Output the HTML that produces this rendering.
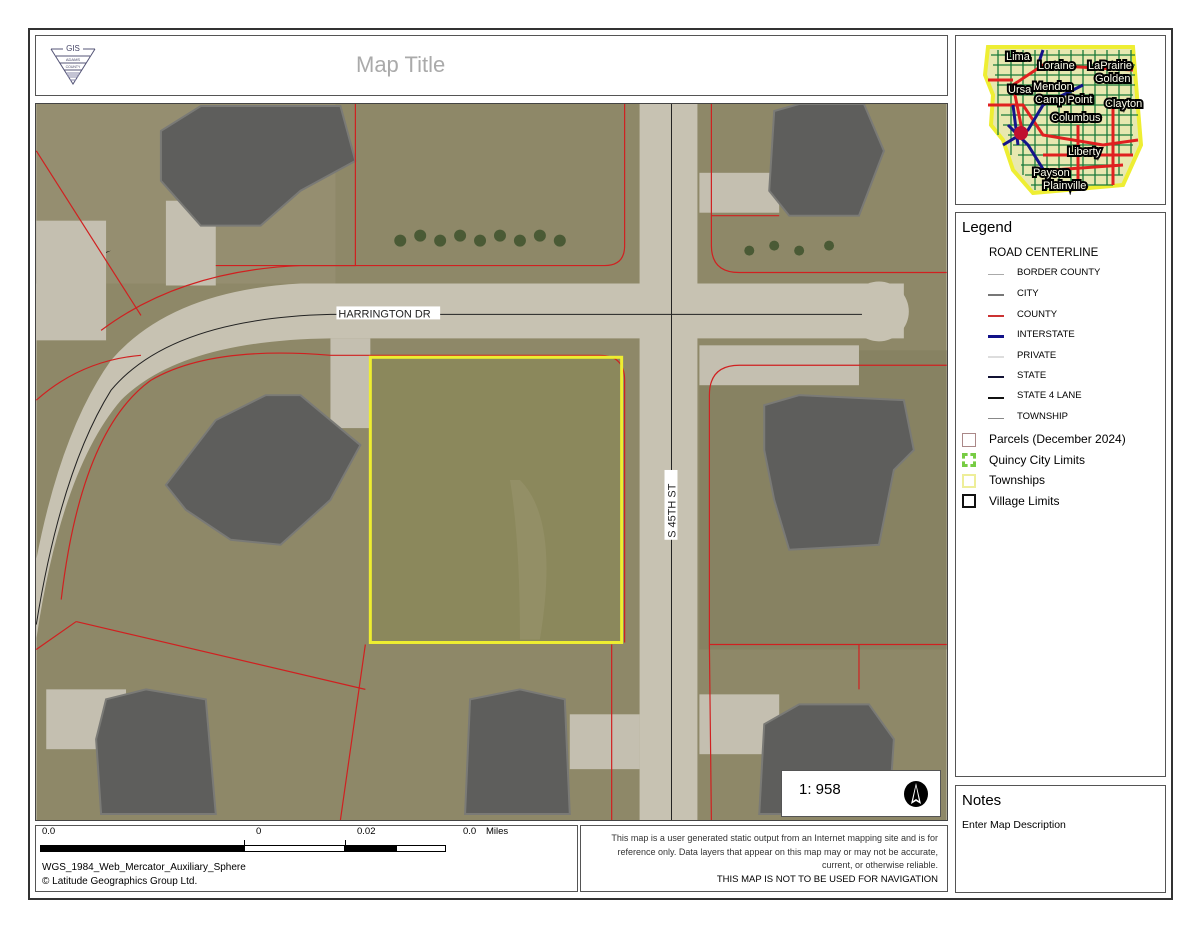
<!DOCTYPE html>
<html><head><meta charset="utf-8"><style>
*{margin:0;padding:0;box-sizing:border-box}
body{width:1200px;height:927px;background:#fff;position:relative;overflow:hidden;font-family:"Liberation Sans",sans-serif;color:#000}
.b{position:absolute;border:1px solid #555;background:#fff}
.t{position:absolute;white-space:nowrap}
.leg{font-size:9.5px}
.ln{position:absolute;left:988px;width:16px;height:1px}
</style></head><body>
<div class="b" style="left:28px;top:28px;width:1145px;height:872px;border:2px solid #333"></div>
<div class="b" style="left:35px;top:35px;width:913px;height:61px"></div>
<svg style="position:absolute;left:48px;top:42px" width="50" height="45" viewBox="0 0 50 45">
<text x="25" y="9" font-size="8" text-anchor="middle" fill="#446" font-family="Liberation Sans">GIS</text>
<path d="M3 7 H15 M35 7 H47 M3 7 L25 42 L47 7 M8 14 H42 M12 21 H38 M16 28 H34" stroke="#557" fill="none" stroke-width="1"/>
<text x="25" y="19" font-size="4" text-anchor="middle" fill="#446">ADAMS</text>
<text x="25" y="26" font-size="3.5" text-anchor="middle" fill="#446">COUNTY</text>
<path d="M18 31 H32 M19 33 H31 M20 35 H30 M22 38 H28" stroke="#88a" stroke-width="1"/></svg>
<div class="t" style="left:356px;top:52px;font-size:22px;color:#aaa">Map Title</div>

<svg style="position:absolute;left:35px;top:103px;border:1px solid #444" width="913" height="718" viewBox="35 103 913 718">
<rect x="35" y="103" width="913" height="718" fill="#8e8868"/>
<rect x="35" y="103" width="300" height="180" fill="#958e70"/>
<rect x="700" y="350" width="248" height="300" fill="#878262"/>
<rect x="370" y="357" width="253" height="287" fill="#8b885c"/>
<path d="M520 480 Q560 520 540 640 L520 640 Q520 540 510 480Z" fill="#a29e78" opacity=".35"/>
<path d="M35 283 Q70 260 110 250" stroke="#b8b3a3" stroke-width="0"/>
<path d="M905 283 H300 Q170 290 110 360 Q60 430 35 560 L35 640 Q60 470 120 400 Q180 340 330 338 H905Z" fill="#c7c2b2"/>
<rect x="640" y="103" width="58" height="718" fill="#c7c2b2"/>
<circle cx="880" cy="311" r="30" fill="#c7c2b2"/>
<rect x="330" y="338" width="40" height="90" fill="#c4bfb0"/>
<rect x="165" y="200" width="50" height="85" fill="#c4bfb0"/>
<rect x="700" y="172" width="80" height="40" fill="#c4bfb0"/>
<rect x="700" y="345" width="160" height="40" fill="#c4bfb0"/>
<rect x="35" y="220" width="70" height="120" fill="#c4bfb0"/>
<rect x="45" y="690" width="80" height="60" fill="#c4bfb0"/>
<rect x="570" y="715" width="70" height="55" fill="#c4bfb0"/>
<rect x="700" y="695" width="80" height="60" fill="#c4bfb0"/>
<g fill="#5e5e5c" stroke="#7a7a76" stroke-width="2">
<path d="M160 130 L200 105 L340 105 L355 160 L300 190 L260 225 L200 225 L160 180Z"/>
<path d="M775 110 L800 103 L865 103 L885 150 L860 215 L790 215 L770 190Z"/>
<path d="M165 485 L215 420 L265 395 L300 395 L360 445 L330 500 L280 545 L230 540 L185 510Z"/>
<path d="M765 405 L800 395 L905 400 L915 450 L895 470 L880 545 L790 550 L775 500 L765 450Z"/>
<path d="M105 700 L145 690 L205 700 L215 815 L100 815 L95 740Z"/>
<path d="M470 700 L520 690 L565 700 L570 815 L465 815Z"/>
<path d="M765 725 L800 705 L870 705 L895 740 L890 815 L760 815Z"/>
</g>
<g fill="#4a5a35"><circle cx="400" cy="240" r="6"/><circle cx="420" cy="235" r="6"/><circle cx="440" cy="240" r="6"/><circle cx="460" cy="235" r="6"/><circle cx="480" cy="240" r="6"/><circle cx="500" cy="235" r="6"/><circle cx="520" cy="240" r="6"/><circle cx="540" cy="235" r="6"/><circle cx="560" cy="240" r="6"/><circle cx="750" cy="250" r="5"/><circle cx="775" cy="245" r="5"/><circle cx="800" cy="250" r="5"/><circle cx="830" cy="245" r="5"/></g>
<g stroke="#d02020" stroke-width="1.2" fill="none">
<path d="M35 150 L140 315"/><path d="M215 265 H355 V103"/><path d="M100 330 Q180 270 300 265 H605 Q625 265 625 245 V103"/>
<path d="M712 103 V245 Q712 272 740 272 H948"/><path d="M712 215 H780"/>
<path d="M35 400 Q80 360 140 355 M60 600 Q80 430 150 380 Q210 345 330 355 H600 Q625 355 625 380 V643"/>
<path d="M75 622 L365 690 M365 645 L340 821 M612 645 V821"/>
<path d="M710 395 Q710 365 740 365 H948 M710 395 V645 H948 M710 645 L712 821 M860 645 V690"/>
<path d="M35 650 L75 622"/>
</g>
<g stroke="#222" stroke-width="1" fill="none">
<path d="M863 314 H330 Q170 318 110 390 Q60 470 35 625"/><path d="M672 103 V821"/></g>
<rect x="370" y="357" width="252" height="286" fill="none" stroke="#eeee30" stroke-width="3"/>
<rect x="336" y="306" width="104" height="13" fill="#fff"/>
<text x="338" y="317" font-size="11" fill="#222" font-family="Liberation Sans">HARRINGTON DR</text>
<rect x="665" y="470" width="13" height="70" fill="#fff"/>
<text transform="translate(676,538) rotate(-90)" font-size="11" fill="#222" font-family="Liberation Sans">S 45TH ST</text>
</svg>
<div class="b" style="left:781px;top:770px;width:160px;height:47px"></div>
<div class="t" style="left:799px;top:781px;font-size:15px">1: 958</div>
<svg style="position:absolute;left:903px;top:780px" width="26" height="28" viewBox="0 0 26 28"><ellipse cx="13" cy="14" rx="12" ry="13" fill="#000"/><path d="M13 3 L18 24 L13 21 L8 24Z" fill="#fff"/><path d="M13 6 L16 21 L13 19 L10 21Z" fill="#000"/></svg>

<div class="b" style="left:35px;top:825px;width:543px;height:67px"></div>
<div class="t" style="left:42px;top:826px;font-size:9.5px">0.0</div>
<div class="t" style="left:256px;top:826px;font-size:9.5px">0</div>
<div class="t" style="left:357px;top:826px;font-size:9.5px">0.02</div>
<div class="t" style="left:463px;top:826px;font-size:9.5px">0.0</div>
<div class="t" style="left:486px;top:826px;font-size:9.5px">Miles</div>
<div style="position:absolute;left:40px;top:845px;width:204px;height:7px;background:#000"></div>
<div style="position:absolute;left:244px;top:845px;width:102px;height:7px;border:1px solid #000"></div>
<div style="position:absolute;left:344px;top:845px;width:52px;height:7px;background:#000"></div>
<div style="position:absolute;left:396px;top:845px;width:50px;height:7px;border:1px solid #000"></div>
<div style="position:absolute;left:244px;top:840px;width:1px;height:6px;background:#000"></div>
<div style="position:absolute;left:345px;top:840px;width:1px;height:6px;background:#000"></div>
<div class="t" style="left:42px;top:861px;font-size:10px;line-height:14px">WGS_1984_Web_Mercator_Auxiliary_Sphere<br>© Latitude Geographics Group Ltd.</div>
<div class="b" style="left:580px;top:825px;width:368px;height:67px"></div>
<div class="t" style="right:262px;top:832px;font-size:9px;line-height:13.5px;text-align:right;color:#333">This map is a user generated static output from an Internet mapping site and is for<br>reference only. Data layers that appear on this map may or may not be accurate,<br>current, or otherwise reliable.<br><span style="color:#000;font-size:9.5px">THIS MAP IS NOT TO BE USED FOR NAVIGATION</span></div>

<div class="b" style="left:955px;top:35px;width:211px;height:170px"></div>
<svg style="position:absolute;left:983px;top:45px" width="162" height="150" viewBox="0 0 162 150">
<path d="M5 2 H150 L158 100 L140 140 L50 148 L30 125 L20 95 L8 80 L10 50 L2 30Z" fill="#e8e8b0" stroke="#ee3" stroke-width="4"/>
<g stroke="#1a7a3a" stroke-width="1.3"><path d="M8 10 H152 M10 20 H152 M12 30 H152 M14 40 H152 M15 50 H150 M15 60 H155 M18 70 H155 M20 80 H150 M25 90 H150 M30 100 H150 M35 110 H145 M38 120 H140 M42 130 H140 M48 140 H130"/><path d="M15 5 V90 M28 5 V110 M40 5 V130 M52 5 V145 M64 5 V145 M76 5 V145 M88 5 V145 M100 5 V140 M112 5 V140 M124 5 V140 M136 5 V130 M148 5 V110"/></g>
<g stroke="#e02020" stroke-width="3" fill="none"><path d="M5 60 H40 L60 90 L120 100 L155 95"/><path d="M40 90 L30 40 L60 20 L150 25"/><path d="M95 80 V140 M130 60 V140 M60 110 H150 M5 35 H30 M70 125 L140 120"/></g>
<g stroke="#14148a" stroke-width="3" fill="none"><path d="M25 80 L45 100 L70 140 M20 100 L45 85 L60 60 L100 40 M30 60 L35 100 M60 5 L55 20"/></g>
<g fill="#c01030"><circle cx="38" cy="88" r="7"/></g>
<g font-size="11" font-family="Liberation Sans" fill="#ffe" stroke="#000" stroke-width="4" paint-order="stroke">
<text x="23" y="15">Lima</text><text x="55" y="24">Loraine</text><text x="105" y="24">LaPrairie</text><text x="112" y="37">Golden</text>
<text x="25" y="48">Ursa</text><text x="50" y="45">Mendon</text><text x="52" y="58">Camp Point</text><text x="122" y="62">Clayton</text>
<text x="68" y="76">Columbus</text><text x="85" y="110">Liberty</text><text x="50" y="131">Payson</text><text x="60" y="144">Plainville</text></g></svg>

<div class="b" style="left:955px;top:212px;width:211px;height:565px"></div>
<div class="t" style="left:962px;top:219px;font-size:15px">Legend</div>
<div class="t" style="left:989px;top:247px;font-size:11.5px">ROAD CENTERLINE</div>
<div class="ln" style="top:274px;background:#aaa"></div><div class="t leg" style="left:1017px;top:267px">BORDER COUNTY</div>
<div class="ln" style="top:294px;background:#777;height:2px"></div><div class="t leg" style="left:1017px;top:288px">CITY</div>
<div class="ln" style="top:315px;background:#c33;height:2px"></div><div class="t leg" style="left:1017px;top:309px">COUNTY</div>
<div class="ln" style="top:335px;background:#118;height:3px"></div><div class="t leg" style="left:1017px;top:329px">INTERSTATE</div>
<div class="ln" style="top:356px;background:#ddd;height:2px"></div><div class="t leg" style="left:1017px;top:350px">PRIVATE</div>
<div class="ln" style="top:376px;background:#113;height:2px"></div><div class="t leg" style="left:1017px;top:370px">STATE</div>
<div class="ln" style="top:397px;background:#111;height:2px"></div><div class="t leg" style="left:1017px;top:390px">STATE 4 LANE</div>
<div class="ln" style="top:418px;background:#888"></div><div class="t leg" style="left:1017px;top:411px">TOWNSHIP</div>
<div style="position:absolute;left:962px;top:433px;width:14px;height:14px;border:1px solid #a88"></div><div class="t" style="left:989px;top:432px;font-size:12px">Parcels (December 2024)</div>
<div style="position:absolute;left:962px;top:453px;width:14px;height:14px;border:3px dashed #7c4"></div><div class="t" style="left:989px;top:453px;font-size:12px">Quincy City Limits</div>
<div style="position:absolute;left:962px;top:474px;width:14px;height:14px;border:2px solid #ee9"></div><div class="t" style="left:989px;top:473px;font-size:12px">Townships</div>
<div style="position:absolute;left:962px;top:494px;width:14px;height:14px;border:2px solid #111"></div><div class="t" style="left:989px;top:494px;font-size:12px">Village Limits</div>

<div class="b" style="left:955px;top:785px;width:211px;height:108px"></div>
<div class="t" style="left:962px;top:792px;font-size:15px">Notes</div>
<div class="t" style="left:962px;top:819px;font-size:10.5px">Enter Map Description</div>
</body></html>
